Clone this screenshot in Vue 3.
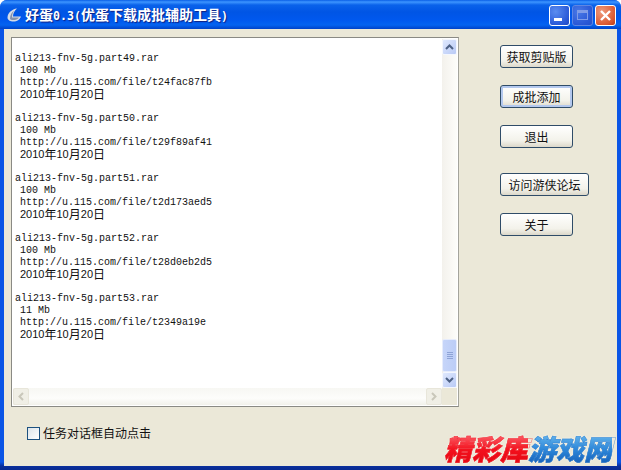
<script setup>
const files = [
  { name: 'ali213-fnv-5g.part49.rar', size: '100 Mb', url: 'http://u.115.com/file/t24fac87fb' },
  { name: 'ali213-fnv-5g.part50.rar', size: '100 Mb', url: 'http://u.115.com/file/t29f89af41' },
  { name: 'ali213-fnv-5g.part51.rar', size: '100 Mb', url: 'http://u.115.com/file/t2d173aed5' },
  { name: 'ali213-fnv-5g.part52.rar', size: '100 Mb', url: 'http://u.115.com/file/t28d0eb2d5' },
  { name: 'ali213-fnv-5g.part53.rar', size: '11 Mb', url: 'http://u.115.com/file/t2349a19e' }
]
</script>

<template>
  <div class="window">
    <header class="titlebar">
      <svg class="appicon" width="16" height="16" viewBox="0 0 16 16">
        <path d="M11 1.5 C6 2 1.5 6 1.5 10.5 C1.5 13 4 14.5 7.5 14.5 C11 14.5 14 12.5 15 9.5 L7 9.5 C7 6.5 8.5 3.5 11 1.5Z" fill="#d5dbe6" />
        <path d="M4 11.5 C4 8 6 5 8 4 C6.5 6 6 8 6 10.5 L13 10.5 C11.5 12.5 9.5 13 7.5 13 C5.5 13 4 12.8 4 11.5Z" fill="#8391ab" />
      </svg>
      <h1 class="title">好蛋<span class="tl">0.3(</span>优蛋下载成批辅助工具<span class="tl">)</span></h1>
      <div class="caption">
        <span class="cbtn"><i class="min"></i></span>
        <span class="cbtn off"><i class="max"></i></span>
        <span class="cbtn close">
          <svg width="13" height="13" viewBox="0 0 13 13"><path d="M2 2 L11 11 M11 2 L2 11" stroke="#fff" stroke-width="2.4" /></svg>
        </span>
      </div>
    </header>

    <main class="client">
      <div class="left">
        <div class="textbox">
          <div class="content">
            <div v-for="f in files" :key="f.name" class="entry">
              <div class="line">{{ f.name }}</div>
              <div class="line ind">{{ f.size }}</div>
              <div class="line ind">{{ f.url }}</div>
              <div class="line ind date">2010<b>年</b>10<b>月</b>20<b>日</b></div>
            </div>
          </div>
          <div class="vscroll">
            <span class="sb up">
              <svg width="9" height="6" viewBox="0 0 9 6"><path d="M1 5 L4.5 1.5 L8 5" fill="none" stroke="#4d6185" stroke-width="2" /></svg>
            </span>
            <div class="track">
              <span class="thumb"><i></i><i></i><i></i><i></i></span>
            </div>
            <span class="sb down">
              <svg width="9" height="6" viewBox="0 0 9 6"><path d="M1 1 L4.5 4.5 L8 1" fill="none" stroke="#4d6185" stroke-width="2" /></svg>
            </span>
          </div>
          <div class="hscroll">
            <span class="hb">
              <svg width="6" height="9" viewBox="0 0 6 9"><path d="M5 1 L1.5 4.5 L5 8" fill="none" stroke="#c9c7ba" stroke-width="2" /></svg>
            </span>
            <span class="hb">
              <svg width="6" height="9" viewBox="0 0 6 9"><path d="M1 1 L4.5 4.5 L1 8" fill="none" stroke="#c9c7ba" stroke-width="2" /></svg>
            </span>
          </div>
          <div class="corner"></div>
        </div>
        <label class="check"><span class="box"></span>任务对话框自动点击</label>
      </div>

      <div class="actions">
        <button class="btn">获取剪贴版</button>
        <button class="btn default">成批添加</button>
        <button class="btn">退出</button>
        <button class="btn wide">访问游侠论坛</button>
        <button class="btn">关于</button>
      </div>
    </main>

    <div class="watermark"><span class="red">精彩库</span><span class="blue">游戏网</span></div>
  </div>
</template>

<style>
html, body { margin: 0; padding: 0; background: #fff; }
</style>

<style scoped>
.window {
  position: relative;
  width: 621px;
  height: 470px;
  box-sizing: border-box;
  display: flex;
  flex-direction: column;
  background: linear-gradient(180deg, #0a55e6 0, #0a55e6 462px, #0a2f9c 466px, #082a90 470px);
  border-radius: 7px 7px 0 0;
  overflow: hidden;
  font-family: "Noto Sans CJK SC", sans-serif;
}
.titlebar {
  height: 29px;
  flex: none;
  display: flex;
  align-items: center;
  padding: 0 5px 0 6px;
  box-sizing: border-box;
  background: linear-gradient(180deg, #0a5fe6 0, #3d95ff 2px, #0a62ea 5px, #0055e5 12px, #0058ee 20px, #0463f0 25px, #0042c8 29px);
}
.appicon { flex: none; }
.title {
  margin: 0 0 0 3px;
  font-size: 14px;
  font-weight: 700;
  line-height: 16px;
  color: #fff;
  text-shadow: 1px 1px 1px #0f1f80;
  white-space: nowrap;
}
.tl { font-family: "DejaVu Sans Mono", monospace; font-size: 11.6px; }
.caption { margin-left: auto; display: flex; gap: 2px; margin-top: 1px; }
.cbtn {
  width: 21px;
  height: 21px;
  box-sizing: border-box;
  border: 1px solid #fff;
  border-radius: 3px;
  background: radial-gradient(circle at 30% 30%, #5b8df0, #2a5ad8 70%, #2048c0);
  display: flex;
  align-items: center;
  justify-content: center;
  position: relative;
}
.cbtn.off { background: radial-gradient(circle at 30% 30%, #4878e6, #2a58d6 70%, #2450cc); border-color: #5f86e2; }
.cbtn.close { background: radial-gradient(circle at 30% 30%, #ee9a7c, #dc5a32 70%, #b83c18); }
.min { width: 8px; height: 3px; background: #fff; margin-top: 8px; margin-right: 3px; }
.max { width: 11px; height: 10px; box-sizing: border-box; border: 1px solid #7f9ce8; border-top-width: 3px; }

.client {
  flex: 1;
  margin: 0 4px 4px;
  background: #ebe8d8;
  display: flex;
  padding: 8px 0 0 7px;
  min-height: 0;
}
.left { width: 448px; flex: none; }
.textbox {
  width: 448px;
  height: 370px;
  box-sizing: border-box;
  border: 1px solid #8a8a84;
  border-right-color: #a4a49c;
  background: #fff;
  padding: 1px;
  display: grid;
  grid-template-columns: 429px 15px;
  grid-template-rows: 349px 17px;
}
.content {
  padding: 14px 0 0 2px;
  font-family: "Liberation Mono", monospace;
  font-size: 10px;
  line-height: 12px;
  color: #111;
  overflow: hidden;
  white-space: pre;
}
.entry { height: 60px; }
.line { height: 12px; line-height: 12px; }
.ind { padding-left: 5px; }
.date {
  display: flex;
  align-items: center;
  height: 10px;
  font-family: "Liberation Sans", sans-serif;
  font-size: 11px;
}
.date b { font-family: "Noto Sans CJK SC", sans-serif; font-size: 12px; line-height: 12px; font-weight: 400; }

.vscroll { display: flex; flex-direction: column; background: linear-gradient(90deg, #f3f1ec, #fdfdfa); }
.sb {
  height: 16px;
  flex: none;
  box-sizing: border-box;
  border: 1px solid #f4f7fe;
  border-radius: 2px;
  background: linear-gradient(135deg, #dfe8fd, #b9caf6);
  display: flex;
  align-items: center;
  justify-content: center;
}
.track { flex: 1; display: flex; flex-direction: column; justify-content: flex-end; }
.thumb {
  height: 33px;
  box-sizing: border-box;
  border: 1px solid #e6ecfc;
  border-radius: 2px;
  background: linear-gradient(90deg, #c6d5f9, #bccdf7);
  display: flex;
  flex-direction: column;
  align-items: center;
  justify-content: center;
  gap: 1px;
}
.thumb i { width: 6px; height: 1px; background: #8ea3d6; }
.hscroll {
  display: flex;
  justify-content: space-between;
  background: linear-gradient(180deg, #f7f7f3, #fdfdfb 60%, #f1f1ea);
}
.hb {
  width: 16px;
  box-sizing: border-box;
  border: 1px solid #e8e6da;
  border-radius: 2px;
  background: #f0efe6;
  display: flex;
  align-items: center;
  justify-content: center;
}
.corner { background: #ebe8d8; }

.check {
  display: flex;
  align-items: center;
  margin: 19px 0 0 16px;
  font-size: 12px;
  line-height: 14px;
  color: #111;
}
.box {
  width: 13px;
  height: 13px;
  box-sizing: border-box;
  border: 1px solid #1c5180;
  background: linear-gradient(135deg, #dce4ea, #fff);
  margin-right: 3px;
}

.actions {
  display: flex;
  flex-direction: column;
  align-items: flex-start;
  margin-left: 41px;
  padding-top: 8px;
}
.btn {
  width: 73px;
  height: 23px;
  margin-bottom: 17px;
  padding: 0;
  box-sizing: border-box;
  border: 1px solid #2f4c68;
  border-radius: 3px;
  background: linear-gradient(180deg, #fff, #f3f2ea 70%, #dcd8ca);
  font-family: "Noto Sans CJK SC", sans-serif;
  font-size: 12px;
  line-height: 21px;
  color: #111;
}
.btn.default { box-shadow: inset 0 0 0 2px #b3c8ee; }
.btn.wide { width: 89px; margin-top: 8px; }

.watermark {
  position: absolute;
  left: 444px;
  top: 434px;
  font-size: 28px;
  line-height: 28px;
  font-weight: 900;
  font-style: italic;
  white-space: nowrap;
  filter: drop-shadow(0 0 1px #f6f4ea);
}
.red, .blue {
  -webkit-background-clip: text;
  background-clip: text;
  color: transparent;
}
.red {
  background-image: linear-gradient(180deg, #ff8088, #f3101c 55%, #e00510);
  -webkit-text-stroke: .5px rgba(240, 40, 50, .7);
}
.blue {
  background-image: linear-gradient(180deg, #7cc8f4, #2c86d8 55%, #0f56b0);
  -webkit-text-stroke: .5px rgba(40, 120, 205, .7);
}
</style>
